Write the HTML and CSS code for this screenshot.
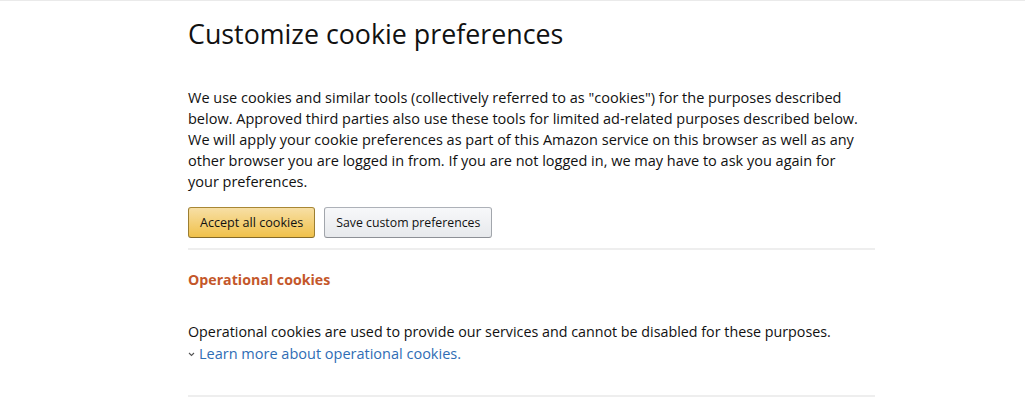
FILE: index.html
```html
<!DOCTYPE html>
<html>
<head>
<meta charset="utf-8">
<link rel="stylesheet" href="styles.css">
</head>
<body>
<div class="topline"></div>
<main class="page">
  <h1 class="title">Customize cookie preferences</h1>
  <p class="intro">We use cookies and similar tools (collectively referred to as "cookies") for the purposes described below. Approved third parties also use these tools for limited ad-related purposes described below. We will apply your cookie preferences as part of this Amazon service on this browser as well as any other browser you are logged in from. If you are not logged in, we may have to ask you again for your preferences.</p>
  <div class="actions">
    <button class="btn btn-primary">Accept all cookies</button>
    <button class="btn btn-secondary">Save custom preferences</button>
  </div>
  <hr class="divider">
  <section class="section">
    <h2 class="section-title">Operational cookies</h2>
    <p class="section-text">Operational cookies are used to provide our services and cannot be disabled for these purposes.</p>
    <a class="learn" href="#"><span class="chev"><svg width="7" height="5" viewBox="0 0 7 5"><path d="M1 1 L3.5 3.5 L6 1" fill="none" stroke="#555" stroke-width="1.1"/></svg></span>Learn more about operational cookies.</a>
  </section>
  <hr class="divider divider-bottom">
</main>
</body>
</html>
```
FILE: styles.css
```css
html, body {
  margin: 0;
  padding: 0;
  background: #fff;
}
body {
  font-family: "Open Sans", "Liberation Sans", sans-serif;
  color: #111;
}
.topline {
  height: 1px;
  background: #eaeaea;
}
.page {
  width: 687px;
  margin-left: 188px;
}
.title {
  margin: 14px 0 0;
  font-size: 26.8px;
  font-weight: 400;
  line-height: 38px;
  color: #111;
}
.intro {
  max-width: 676px;
  margin: 34px 0 0;
  font-size: 14.5px;
  line-height: 21px;
}
.actions {
  display: flex;
  gap: 9px;
  margin-top: 15px;
}
.btn {
  font-family: inherit;
  font-size: 12.6px;
  height: 31px;
  padding: 0 11px;
  border-radius: 3px;
  color: #111;
  cursor: pointer;
}
.btn-primary {
  background: linear-gradient(to bottom, #f7dfa5, #f0c14b);
  border: 1px solid #a88734;
  border-color: #a88734 #9c7e31 #846a29;
}
.btn-secondary {
  font-size: 12.3px;
  background: linear-gradient(to bottom, #f7f8fa, #e7e9ec);
  border: 1px solid #adb1b8;
  border-color: #adb1b8 #a2a6ac #8d9096;
}
.divider {
  margin: 10px 0 0;
  border: 0;
  border-top: 2px solid #eeeeee;
  height: 0;
}
.section-title {
  margin: 19px 0 0;
  font-size: 14.2px;
  font-weight: 700;
  line-height: 21px;
  color: #c4572a;
}
.section-text {
  margin: 31px 0 0;
  font-size: 14.3px;
  line-height: 21px;
}
.learn {
  display: flex;
  width: fit-content;
  align-items: center;
  font-size: 14.5px;
  line-height: 21px;
  margin-top: 1px;
  color: #2f6db5;
  text-decoration: none;
}
.chev {
  display: inline-flex;
  margin-right: 4px;
  margin-top: 2px;
}
.divider-bottom {
  margin-top: 31px;
}
```
